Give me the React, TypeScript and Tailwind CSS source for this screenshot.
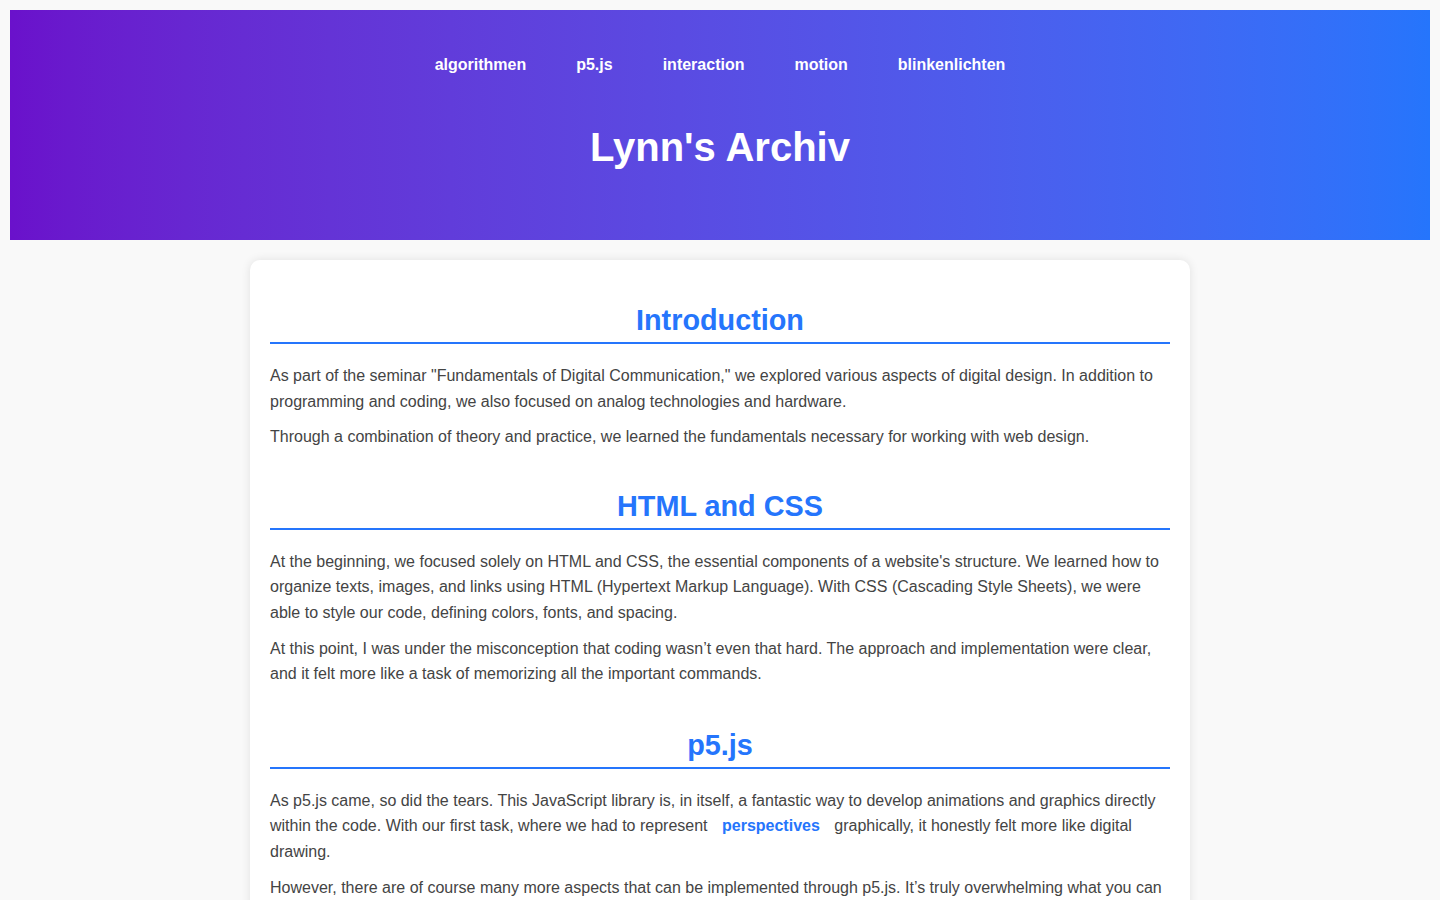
const navItems = ['algorithmen', 'p5.js', 'interaction', 'motion', 'blinkenlichten'];

function Heading({ children }: { children: React.ReactNode }) {
  return (
    <h2 className="border-b-2 border-[#2575fc] pb-[5px] mb-[19px] text-center text-[28.8px] leading-[33px] font-bold text-[#2575fc]">
      {children}
    </h2>
  );
}

function P({ children }: { children: React.ReactNode }) {
  return <p className="mb-[10px] text-base leading-[25.6px] text-[#444]">{children}</p>;
}

export default function App() {
  return (
    <div className="min-h-screen bg-[#f9f9f9] pt-[10px] pb-10 font-['Liberation_Sans',Arial,sans-serif]">
      <header className="mx-[10px] h-[230px] bg-gradient-to-r from-[#6a11cb] to-[#2575fc] pt-[43px] text-white">
        <nav>
          <ul className="flex justify-center gap-[50px]">
            {navItems.map((item) => (
              <li key={item}>
                <a href="#" className="text-base leading-[18px] font-bold text-white">
                  {item}
                </a>
              </li>
            ))}
          </ul>
        </nav>
        <h1 className="mt-[47px] text-center text-[40px] leading-[46px] font-bold">Lynn's Archiv</h1>
      </header>

      <main className="mx-auto mt-5 w-[940px] rounded-[10px] bg-white px-5 pt-[44px] pb-5 shadow-[0_0_10px_rgba(0,0,0,0.1)]">
        <section>
          <Heading>Introduction</Heading>
          <P>
            As part of the seminar "Fundamentals of Digital Communication," we explored various aspects of digital
            design. In addition to programming and coding, we also focused on analog technologies and hardware.
          </P>
          <P>
            Through a combination of theory and practice, we learned the fundamentals necessary for working with web
            design.
          </P>
        </section>

        <section className="mt-[40px]">
          <Heading>HTML and CSS</Heading>
          <P>
            At the beginning, we focused solely on HTML and CSS, the essential components of a website's structure. We
            learned how to organize texts, images, and links using HTML (Hypertext Markup Language). With CSS (Cascading
            Style Sheets), we were able to style our code, defining colors, fonts, and spacing.
          </P>
          <P>
            At this point, I was under the misconception that coding wasn’t even that hard. The approach and
            implementation were clear, and it felt more like a task of memorizing all the important commands.
          </P>
        </section>

        <section className="mt-[42px]">
          <Heading>p5.js</Heading>
          <P>
            As p5.js came, so did the tears. This JavaScript library is, in itself, a fantastic way to develop
            animations and graphics directly within the code. With our first task, where we had to represent{' '}
            <a href="#" className="mx-[10px] font-bold text-[#2575fc]">
              perspectives
            </a>{' '}
            graphically, it honestly felt more like digital drawing.
          </P>
          <P>
            However, there are of course many more aspects that can be implemented through p5.js. It’s truly
            overwhelming what you can create with it once you understand the basics.
          </P>
        </section>
      </main>
    </div>
  );
}
